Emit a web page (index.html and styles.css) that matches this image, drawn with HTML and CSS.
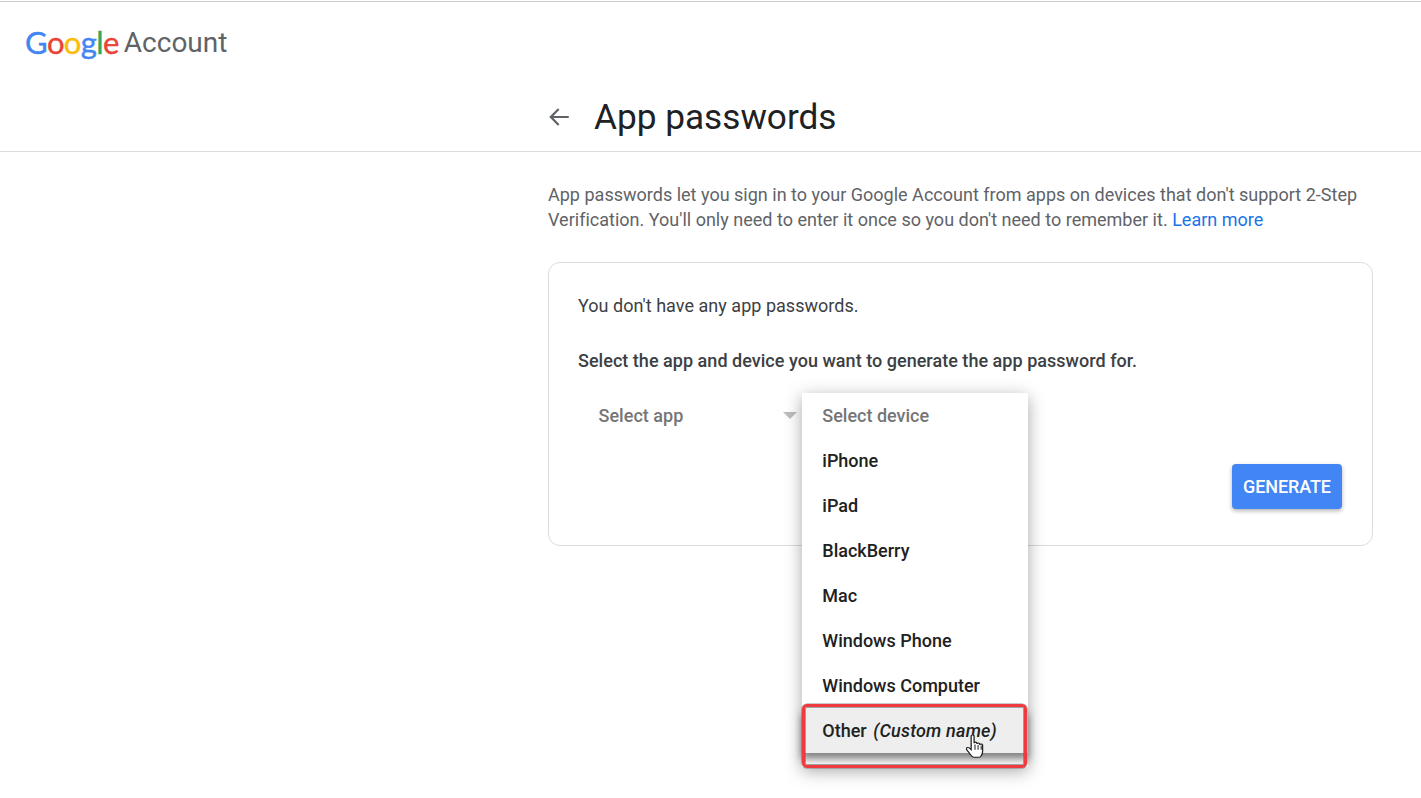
FILE: index.html
```html
<!DOCTYPE html>
<html>
<head>
    <link rel="stylesheet" href="styles.css">
</head>
<body>
    <div class="top-line"></div>
    <header class="top-bar">
        <span class="logo"><span class="g-blue">G</span><span class="g-red">o</span><span class="g-yellow">o</span><span class="g-blue">g</span><span class="g-green">l</span><span class="g-red">e</span></span>
        <span class="product">Account</span>
    </header>

    <div class="title-bar">
        <div class="title-inner">
            <svg class="back" width="26" height="26" viewBox="0 0 24 24"><path d="M21 11H6.83l5.59-5.59L11 4l-8 8 8 8 1.41-1.41L6.83 13H21z"/></svg>
            <h1>App passwords</h1>
        </div>
    </div>

    <main class="content">
        <p class="intro">App passwords let you sign in to your Google Account from apps on devices that don't support 2-Step Verification. You'll only need to enter it once so you don't need to remember it. <a href="#">Learn more</a></p>

        <section class="card">
            <p class="empty">You don't have any app passwords.</p>
            <p class="hint">Select the app and device you want to generate the app password for.</p>

            <div class="selects">
                <div class="select-app">
                    <span>Select app</span>
                    <i class="caret"></i>
                </div>
                <div class="select-device">
                    <ul class="menu">
                        <li class="muted">Select device</li>
                        <li>iPhone</li>
                        <li>iPad</li>
                        <li>BlackBerry</li>
                        <li>Mac</li>
                        <li>Windows Phone</li>
                        <li>Windows Computer</li>
                        <li class="hover">Other <em>(Custom name)</em></li>
                    </ul>
                    <div class="highlight"></div>
                    <svg class="cursor" width="18" height="23" viewBox="1 1 14 22" preserveAspectRatio="none">
                        <path d="M5 2.2c0-1.5 2.3-1.5 2.3 0v6.6c0-1.3 2.2-1.3 2.2 0v.8c0-1.3 2.2-1.3 2.2 0v.9c0-1.2 2.2-1.2 2.2 0v6.2c0 2.6-1.5 5.5-2.3 5.5H7c-1.2 0-1.9-1.4-3-3.3L1.5 15c-.9-1.5.8-2.8 2-1.6L5 15z" fill="#fff" stroke="#222" stroke-width="1"/>
                        <path d="M8 10v5M10.4 10.5V15M12.8 11v4" fill="none" stroke="#222" stroke-width=".8"/>
                    </svg>
                </div>
            </div>

            <div class="actions">
                <button class="generate" type="button">GENERATE</button>
            </div>
        </section>
    </main>
</body>
</html>
```

FILE: styles.css
```css
body {
  margin: 0;
  padding-top: 1px;
  font-family: Roboto, Arial, sans-serif;
  background-color: #fff;
  color: #202124;
  height: 797px;
  overflow: hidden;
}

.top-line {
  height: 1px;
  background-color: #cbcbcb;
}

.top-bar {
  height: 83px;
  padding-left: 25px;
  display: flex;
  align-items: flex-start;
  gap: 5px;
}

.logo {
  font-family: Lato, Arial, sans-serif;
  font-size: 31px;
  line-height: 80px;
  letter-spacing: -0.6px;
  -webkit-text-stroke: 0.4px;
}

.g-blue { color: #4285f4; }
.g-red { color: #ea4335; }
.g-yellow { color: #fbbc05; }
.g-green { color: #34a853; }

.product {
  font-size: 28px;
  line-height: 82px;
  color: #5f6368;
}

.title-bar {
  height: 66px;
  border-bottom: 1px solid #dadce0;
}

.title-inner {
  margin-left: 546px;
  display: flex;
  align-items: center;
  height: 64px;
}

.back {
  fill: #5f6368;
}

h1 {
  margin: 0 0 0 22px;
  font-size: 35.2px;
  font-weight: 400;
}

.content {
  margin-left: 548px;
  width: 825px;
}

.intro {
  margin: 30px 0 30px;
  font-size: 18px;
  line-height: 25px;
  letter-spacing: 0.01px;
  color: #5f6368;
}

.intro a {
  color: #1a73e8;
  text-decoration: none;
}

.card {
  box-sizing: border-box;
  height: 284px;
  border: 1px solid #dadce0;
  border-radius: 12px;
  padding: 30px 30px 0 29px;
  font-size: 18px;
  letter-spacing: 0.03px;
  color: #3c4043;
}

.empty {
  margin: 0 0 30px;
  line-height: 25px;
}

.hint {
  margin: 0;
  line-height: 25px;
  font-weight: 500;
}

.selects {
  display: flex;
  margin-top: 20px;
  font-weight: 500;
}

.select-app {
  width: 224px;
  height: 45px;
  padding: 0 5px 0 20.5px;
  box-sizing: border-box;
  display: flex;
  align-items: center;
  justify-content: space-between;
  color: #757575;
}

.caret {
  border-left: 7.5px solid transparent;
  border-right: 7.5px solid transparent;
  border-top: 7.5px solid #bdbdbd;
}

.select-device {
  position: relative;
  width: 226px;
  height: 45px;
}

.menu {
  position: absolute;
  top: 0;
  left: 0;
  width: 226px;
  margin: 0;
  padding: 0 0 14px;
  list-style: none;
  background: #fff;
  box-shadow: 0 4px 16px rgba(0, 0, 0, 0.35);
  color: #212121;
  letter-spacing: 0;
}

.menu li {
  box-sizing: border-box;
  height: 45px;
  line-height: 45px;
  padding-left: 20.3px;
}

.menu .muted {
  color: #757575;
}

.menu .hover {
  background: #eee;
  box-shadow: 0 6px 8px rgba(0, 0, 0, 0.5);
}

.menu em {
  margin-left: 2px;
  letter-spacing: 0.2px;
}

.highlight {
  position: absolute;
  top: 311px;
  left: 0;
  width: 225px;
  height: 64px;
  box-sizing: border-box;
  border: 3.5px solid #ef3b40;
  border-radius: 5px;
  box-shadow: 0 0 0 0.5px rgba(80, 80, 80, 0.6), inset 0 0 0 1px rgba(80, 80, 80, 0.5);
}

.cursor {
  position: absolute;
  top: 342px;
  left: 164px;
}

.actions {
  display: flex;
  justify-content: flex-end;
  margin-top: 26px;
}

.generate {
  width: 110px;
  height: 45px;
  border: none;
  border-radius: 4px;
  background-color: #4285f4;
  color: #fff;
  font-family: Roboto, Arial, sans-serif;
  font-size: 18px;
  font-weight: 500;
  letter-spacing: -0.1px;
  box-shadow: 0 2px 4px rgba(0, 0, 0, 0.3);
}
```
